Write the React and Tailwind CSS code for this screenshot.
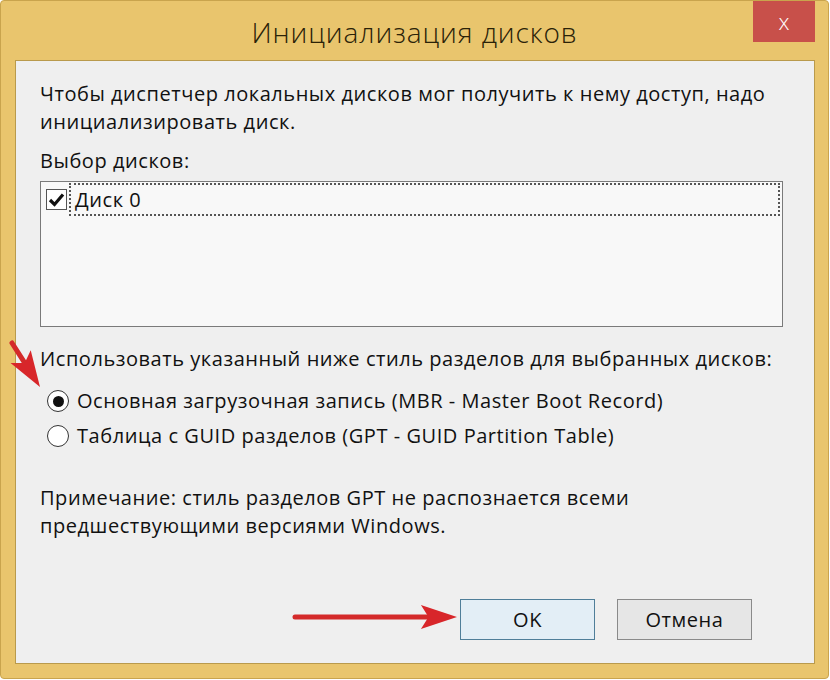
import React from "react";

function RedArrow({ className, x1, y1, x2, y2, w, h }) {
  // simple red pointer arrow drawn over the dialog
  const ang = Math.atan2(y2 - y1, x2 - x1);
  const len = 38;
  const spread = 0.32;
  const bx = x2 - Math.cos(ang) * len * 0.75;
  const by = y2 - Math.sin(ang) * len * 0.75;
  const p1 = [x2 - Math.cos(ang - spread) * len, y2 - Math.sin(ang - spread) * len];
  const p2 = [x2 - Math.cos(ang + spread) * len, y2 - Math.sin(ang + spread) * len];
  return (
    <svg className={className} width={w} height={h} viewBox={`0 0 ${w} ${h}`}>
      <line x1={x1} y1={y1} x2={bx} y2={by} stroke="#d42a2a" strokeWidth="5" strokeLinecap="round" />
      <polygon points={`${x2},${y2} ${p1[0]},${p1[1]} ${bx},${by} ${p2[0]},${p2[1]}`} fill="#d8262a" />
    </svg>
  );
}

function App() {
  return (
    <div className="relative w-[830px] h-[680px] bg-white overflow-hidden" style={{ fontFamily: "'Open Sans', 'Noto Sans', sans-serif" }}>
      <div className="w-[829px] h-[679px] bg-[#e9c56d] border border-[#c9a44d] rounded-sm flex flex-col">
        {/* Title bar */}
        <div className="relative h-[59px] flex items-center justify-center">
          <span className="text-[28px] font-light text-[#2a2208] tracking-[0.9px] mt-[2px]">Инициализация дисков</span>
          <div className="absolute right-[13px] top-0 w-[62px] h-[41px] bg-[#c8504a] flex items-center justify-center text-white text-[22px] font-light">
            x
          </div>
        </div>

        {/* Client area */}
        <div className="ml-[14px] w-[800px] h-[604px] bg-[#efefef] border border-[#b99a4c] text-[#111] text-[20px] leading-[28px] tracking-[0.55px] px-[24px]">
          <p className="mt-[19px]">
            Чтобы диспетчер локальных дисков мог получить к нему доступ, надо
            <br />
            инициализировать диск.
          </p>
          <p className="mt-[11px]">Выбор дисков:</p>

          <div className="mt-[6px] w-[743px] h-[146px] border border-[#7a7a7a] bg-[#f8f8f8] pt-[1px] pr-[2px]">
            <div className="flex items-center h-[33px]">
              <div className="ml-[5px] w-[21px] h-[21px] border border-[#555] bg-white flex items-center justify-center">
                <svg width="17" height="15" viewBox="0 0 17 15">
                  <path d="M2 8 L6.5 12.5 L15 2.5" fill="none" stroke="#111" strokeWidth="3.2" />
                </svg>
              </div>
              <div className="ml-[2px] flex-1 h-[33px] border-2 border-dotted border-[#555] flex items-center pl-[4px]">
                Диск 0
              </div>
            </div>
          </div>

          <p className="mt-[18px]">Использовать указанный ниже стиль разделов для выбранных дисков:</p>

          <div className="mt-[14px] flex flex-col gap-[7px]">
            <div className="flex items-center h-[28px]">
              <div className="ml-[7px] w-[22px] h-[22px] rounded-full border border-[#333] bg-white flex items-center justify-center">
                <div className="w-[11px] h-[11px] rounded-full bg-[#111]" />
              </div>
              <span className="ml-[8px]">Основная загрузочная запись (MBR - Master Boot Record)</span>
            </div>
            <div className="flex items-center h-[28px]">
              <div className="ml-[7px] w-[22px] h-[22px] rounded-full border border-[#333] bg-white" />
              <span className="ml-[8px]">Таблица с GUID разделов (GPT - GUID Partition Table)</span>
            </div>
          </div>

          <p className="mt-[34px]">
            Примечание: стиль разделов GPT не распознается всеми
            <br />
            предшествующими версиями Windows.
          </p>

          <div className="mt-[59px] flex justify-end gap-[22px] pr-[38px]">
            <div className="w-[135px] h-[41px] border border-[#4f7e99] bg-[#e3eef6] flex items-center justify-center text-[20px]">
              OK
            </div>
            <div className="w-[135px] h-[41px] border border-[#8a8a8a] bg-[#e6e6e6] flex items-center justify-center text-[20px]">
              Отмена
            </div>
          </div>
        </div>
      </div>

      {/* annotation arrows */}
      <RedArrow className="absolute left-0 top-[335px]" w={50} h={60} x1={12} y1={8} x2={40} y2={52} />
      <RedArrow className="absolute left-[285px] top-[597px]" w={180} h={40} x1={10} y1={20} x2={172} y2={20} />
    </div>
  );
}

export default App;
